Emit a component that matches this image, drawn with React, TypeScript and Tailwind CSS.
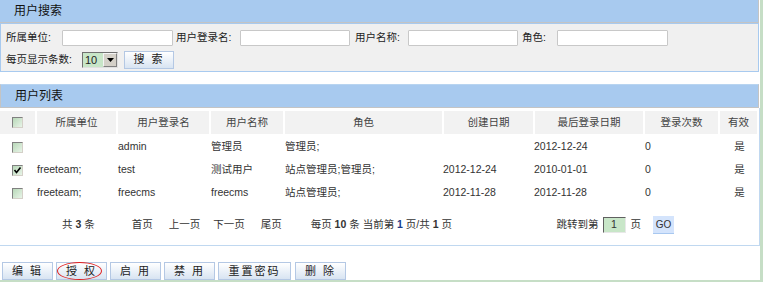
import React from 'react';

const font = { fontFamily: '"Liberation Sans", "Noto Sans CJK SC", sans-serif' };

const cols = ['所属单位', '用户登录名', '用户名称', '角色', '创建日期', '最后登录日期', '登录次数', '有效'];

const rows = [
  { checked: false, unit: '', login: 'admin', name: '管理员', role: '管理员;', created: '', last: '2012-12-24', count: '0' },
  { checked: true, unit: 'freeteam;', login: 'test', name: '测试用户', role: '站点管理员;管理员;', created: '2012-12-24', last: '2010-01-01', count: '0' },
  { checked: false, unit: 'freeteam;', login: 'freecms', name: 'freecms', role: '站点管理员;', created: '2012-11-28', last: '2012-11-28', count: '0' },
];

function Check({ checked }: { checked?: boolean }) {
  return (
    <span className="relative inline-block w-[11px] h-[11px] border border-t-[#808080] border-l-[#808080] border-r-[#d4d0c8] border-b-[#d4d0c8] bg-gradient-to-br from-[#b8d8b8] to-[#e8f4e8]">
      {checked && (
        <svg viewBox="0 0 9 9" className="absolute inset-0 w-[9px] h-[9px]">
          <path d="M1.5 4 L3.5 6.5 L7.5 1.5" stroke="#000" strokeWidth="1.6" fill="none" />
        </svg>
      )}
    </span>
  );
}

function Input({ w }: { w: string }) {
  return <span className={`inline-block h-[16px] ${w} bg-white border border-[#c8c8c8] rounded-[1px]`} />;
}

function Btn({ label, w }: { label: string; w: string }) {
  return (
    <div className={`${w} h-[18px] flex items-center justify-center border border-[#b4c8e4] bg-gradient-to-b from-white to-[#d8e4f2] text-[#222] text-[11px] tracking-[2px]`}>
      {label}
    </div>
  );
}

export default function App() {
  return (
    <div className="w-[763px] h-[282px] bg-[#c6dec6] overflow-hidden" style={font}>
      <div className="w-[760px] h-[280px] bg-white flex flex-col text-[10.5px] text-[#222]">
        {/* 用户搜索 */}
        <div className="h-[23px] w-[759px] bg-[#a8caef] border-b border-r border-[#c4c4c4] flex items-center pl-[14px] text-[12px] text-[#111]">
          用户搜索
        </div>
        <div className="h-[49px] w-[759px] bg-[#f0f0f0] border border-[#a8caef] flex flex-col px-[5px] pt-[5px] gap-[5px]">
          <div className="flex items-center h-[17px]">
            <span className="w-[56px]">所属单位:</span>
            <Input w="w-[111px]" />
            <span className="ml-[3px] w-[64px]">用户登录名:</span>
            <Input w="w-[110px]" />
            <span className="ml-[5px] w-[53px]">用户名称:</span>
            <Input w="w-[110px]" />
            <span className="ml-[4px] w-[35px]">角色:</span>
            <Input w="w-[111px]" />
          </div>
          <div className="flex items-center h-[17px]">
            <span className="w-[76px]">每页显示条数:</span>
            <span className="flex h-[16px] w-[36px] border border-t-[#707070] border-l-[#707070] border-r-[#e0e0e0] border-b-[#e0e0e0]">
              <span className="flex-1 bg-[#c8e6c8] pl-[2px] leading-[14px] text-[11px]">10</span>
              <span className="w-[14px] bg-[#d4d0c8] border border-[#f4f4f4] border-r-[#808080] border-b-[#808080] flex items-center justify-center">
                <svg viewBox="0 0 7 4" className="w-[7px] h-[4px]"><path d="M0 0 H7 L3.5 4 Z" fill="#000" /></svg>
              </span>
            </span>
            <div className="ml-[6px]">
              <Btn label="搜 索" w="w-[50px]" />
            </div>
          </div>
        </div>

        {/* 用户列表 */}
        <div className="mt-[12px] h-[24px] w-[759px] bg-[#a8caef] border border-[#c4c4c4] border-t-[#b8d4f0] flex items-center pl-[14px] text-[12px] text-[#111]">
          用户列表
        </div>
        <div className="w-[760px] h-[138px] border-r border-b border-[#c0d8f0] flex flex-col">
          <div className="mt-[3px] grid grid-cols-[35px_81px_93px_74px_159px_91px_110px_75px_39px] h-[23px]">
            <div className="bg-[#f2f2f2] flex items-center justify-center"><Check /></div>
            {cols.map((c) => (
              <div key={c} className="bg-[#f2f2f2] border-l-2 border-white flex items-center justify-center text-[#444]">
                {c}
              </div>
            ))}
          </div>
          {rows.map((r, i) => (
            <div key={i} className="grid grid-cols-[35px_81px_93px_74px_159px_91px_110px_75px_39px] h-[23px] pt-[3px] items-center text-[#333]">
              <div className="flex justify-center"><Check checked={r.checked} /></div>
              <div className="pl-[2px]">{r.unit}</div>
              <div className="pl-[2px]">{r.login}</div>
              <div className="pl-[2px]">{r.name}</div>
              <div className="pl-[2px]">{r.role}</div>
              <div className="pl-[1px]">{r.created}</div>
              <div className="pl-[1px]">{r.last}</div>
              <div className="pl-[2px]">{r.count}</div>
              <div className="text-center pl-[4px]">是</div>
            </div>
          ))}
          <div className="mt-[12px] flex items-center h-[20px] text-[#333]">
            <span className="ml-[62px]">共 <b>3</b> 条</span>
            <span className="ml-[37px]">首页</span>
            <span className="ml-[16px]">上一页</span>
            <span className="ml-[13px]">下一页</span>
            <span className="ml-[16px]">尾页</span>
            <span className="ml-[29px]">
              每页 <b>10</b> 条 当前第 <b className="text-[#1a3c8c]">1</b> 页/共 <b>1</b> 页
            </span>
            <span className="ml-auto">跳转到第</span>
            <span className="ml-[4px] w-[23px] h-[16px] bg-[#c8e6c8] border border-t-[#606060] border-l-[#606060] border-r-[#e8e8e8] border-b-[#e8e8e8] flex items-center justify-center">1</span>
            <span className="ml-[5px]">页</span>
            <span className="ml-[12px] mr-[85px] w-[21px] h-[18px] bg-[#d4e4fc] border-b border-[#a8c8f0] flex items-center justify-center text-[10px]">GO</span>
          </div>
        </div>

        {/* 操作按钮 */}
        <div className="mt-[16px] flex items-center pl-[2px] relative">
          <Btn label="编 辑" w="w-[51px]" />
          <div className="ml-[3px] relative">
            <Btn label="授 权" w="w-[51px]" />
            <span className="absolute left-[1px] top-[0px] w-[45px] h-[18px] border border-[#e02020] rounded-[50%]" />
          </div>
          <div className="ml-[3px]"><Btn label="启 用" w="w-[51px]" /></div>
          <div className="ml-[3px]"><Btn label="禁 用" w="w-[51px]" /></div>
          <div className="ml-[3px]"><Btn label="重置密码" w="w-[73px]" /></div>
          <div className="ml-[4px]"><Btn label="删 除" w="w-[51px]" /></div>
        </div>
      </div>
    </div>
  );
}
